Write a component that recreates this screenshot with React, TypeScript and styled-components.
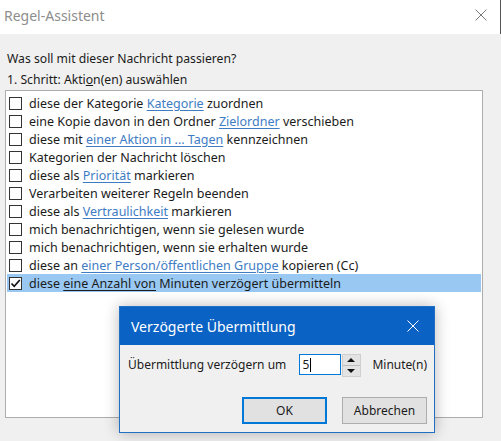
import styled, { createGlobalStyle } from "styled-components";

const GlobalStyle = createGlobalStyle`
  html, body {
    margin: 0;
    padding: 0;
    background: #f0f0f0;
  }
  body {
    font-family: "Noto Sans", "Open Sans", sans-serif;
    font-size: 12px;
    color: #1b1b1b;
  }
`;

const Window = styled.div`
  position: relative;
  width: 501px;
  height: 441px;
  overflow: hidden;
  background: #f0f0f0;
  display: flex;
  flex-direction: column;
`;

const TitleBar = styled.div`
  height: 34px;
  flex: none;
  background: #fff;
  border-right: 1px solid #555;
  display: flex;
  align-items: center;
  justify-content: space-between;
  padding: 0 13px 0 4px;
`;

const Title = styled.span`
  font-size: 14px;
  color: #8d8d8d;
  margin-top: -4px;
`;

const CloseIcon = ({ color, size }: { color: string; size: number }) => (
  <svg width={size} height={size} viewBox="0 0 12 12">
    <path d="M0.5 0.5 L11.5 11.5 M11.5 0.5 L0.5 11.5" stroke={color} strokeWidth="1" fill="none" />
  </svg>
);

const CloseButton = styled.span<{ $top: number }>`
  display: flex;
  margin-top: ${(p) => p.$top}px;
`;

const Body = styled.div`
  flex: 1;
  padding: 17px 0 0 5px;
  display: flex;
  flex-direction: column;
`;

const Question = styled.div`
  padding-left: 2px;
  line-height: 16px;
  font-size: 12.2px;
`;

const Step = styled.div`
  padding-left: 2px;
  margin-top: 5px;
  line-height: 16px;
  font-size: 12.2px;
`;

const Accel = styled.span`
  text-decoration: underline;
`;

const ListBox = styled.div`
  margin-top: 2px;
  width: 478px;
  height: 328px;
  box-sizing: border-box;
  border: 1px solid #adadad;
  background: #fff;
  padding: 3px 1px 0 1px;
  font-size: 12.5px;
`;

const Row = styled.div<{ $selected?: boolean }>`
  height: 18px;
  display: flex;
  align-items: center;
  padding-left: 2px;
  background: ${(p) => (p.$selected ? "#99c9f3" : "transparent")};
  white-space: nowrap;
`;

const Box = styled.span`
  width: 13px;
  height: 13px;
  box-sizing: border-box;
  border: 1px solid #333;
  background: #fff;
  flex: none;
  display: flex;
  align-items: center;
  justify-content: center;
  margin-right: 7px;
`;

const Link = styled.span<{ $plain?: boolean }>`
  color: ${(p) => (p.$plain ? "#1b1b1b" : "#3e7cc4")};
  text-decoration: underline;
  text-underline-offset: 2px;
`;

type Part = string | { link: string };

const rows: { parts: Part[]; checked?: boolean }[] = [
  { parts: ["diese der Kategorie ", { link: "Kategorie" }, " zuordnen"] },
  { parts: ["eine Kopie davon in den Ordner ", { link: "Zielordner" }, " verschieben"] },
  { parts: ["diese mit ", { link: "einer Aktion in ... Tagen" }, " kennzeichnen"] },
  { parts: ["Kategorien der Nachricht löschen"] },
  { parts: ["diese als ", { link: "Priorität" }, " markieren"] },
  { parts: ["Verarbeiten weiterer Regeln beenden"] },
  { parts: ["diese als ", { link: "Vertraulichkeit" }, " markieren"] },
  { parts: ["mich benachrichtigen, wenn sie gelesen wurde"] },
  { parts: ["mich benachrichtigen, wenn sie erhalten wurde"] },
  { parts: ["diese an ", { link: "einer Person/öffentlichen Gruppe" }, " kopieren (Cc)"] },
  { parts: ["diese ", { link: "eine Anzahl von" }, " Minuten verzögert übermitteln"], checked: true },
];

const Dialog = styled.div`
  position: absolute;
  left: 119px;
  top: 306px;
  width: 316px;
  height: 127px;
  box-sizing: border-box;
  border: 1px solid #1f6fc5;
  background: #f0f0f0;
  box-shadow: 0 0 14px rgba(0, 0, 0, 0.28);
  display: flex;
  flex-direction: column;
`;

const DialogTitle = styled.div`
  height: 38px;
  flex: none;
  background: #0a63c4;
  color: #fff;
  font-size: 14px;
  display: flex;
  align-items: center;
  justify-content: space-between;
  padding: 0 15px 0 11px;
`;

const DialogBody = styled.div`
  padding: 9px 7px 0 8px;
  display: flex;
  flex-direction: column;
`;

const FieldRow = styled.div`
  display: flex;
  align-items: flex-start;
  height: 23px;
`;

const Label = styled.span`
  width: 171px;
  line-height: 20px;
  margin-top: 1px;
`;

const Input = styled.div`
  width: 42px;
  height: 21px;
  box-sizing: border-box;
  border: 1px solid #0078d7;
  background: #fff;
  display: flex;
  align-items: center;
  padding-left: 3px;
  line-height: 16px;
`;

const Caret = styled.span`
  width: 1px;
  height: 14px;
  background: #000;
  margin-left: 1px;
`;

const Spinner = styled.div`
  width: 20px;
  height: 23px;
  margin-left: 1px;
  display: flex;
  flex-direction: column;
  background: #e3e3e3;
  border: 1px solid #cfcfcf;
  box-sizing: border-box;
`;

const SpinHalf = styled.div<{ $top?: boolean }>`
  flex: 1;
  display: flex;
  align-items: center;
  justify-content: center;
  border-bottom: ${(p) => (p.$top ? "1px solid #bdbdbd" : "none")};
`;

const Unit = styled.span`
  margin-left: 11px;
  line-height: 20px;
  margin-top: 1px;
`;

const Buttons = styled.div`
  display: flex;
  justify-content: flex-end;
  gap: 15px;
  margin-top: 20px;
`;

const Button = styled.div<{ $default?: boolean }>`
  width: 85px;
  height: 27px;
  box-sizing: border-box;
  border: ${(p) => (p.$default ? "2px solid #0078d7" : "1px solid #adadad")};
  background: #e1e1e1;
  display: flex;
  align-items: center;
  justify-content: center;
`;

const Arrow = ({ up }: { up?: boolean }) => (
  <svg width="8" height="4" viewBox="0 0 8 4">
    <polygon points={up ? "0,4 8,4 4,0" : "0,0 8,0 4,4"} fill="#111" />
  </svg>
);

function App() {
  return (
    <Window>
      <GlobalStyle />
      <TitleBar>
        <Title>Regel-Assistent</Title>
        <CloseButton $top={-4}>
          <CloseIcon color="#7a7a7a" size={12} />
        </CloseButton>
      </TitleBar>
      <Body>
        <Question>Was soll mit dieser Nachricht passieren?</Question>
        <Step>
          1. Schritt: Akti<Accel>o</Accel>n(en) auswählen
        </Step>
        <ListBox>
          {rows.map((r, i) => (
            <Row key={i} $selected={r.checked}>
              <Box>
                {r.checked ? (
                  <svg width="11" height="11" viewBox="0 0 11 11">
                    <path d="M1.5 5.5 L4.2 8.3 L9.8 2" stroke="#111" strokeWidth="1.7" fill="none" />
                  </svg>
                ) : null}
              </Box>
              {r.parts.map((p, j) =>
                typeof p === "string" ? (
                  <span key={j}>{p.replace(/ /g, "\u00a0")}</span>
                ) : (
                  <Link key={j} $plain={r.checked}>
                    {p.link}
                  </Link>
                )
              )}
            </Row>
          ))}
        </ListBox>
      </Body>
      <Dialog>
        <DialogTitle>
          <span>Verzögerte Übermittlung</span>
          <CloseButton $top={0}>
            <CloseIcon color="#fff" size={12} />
          </CloseButton>
        </DialogTitle>
        <DialogBody>
          <FieldRow>
            <Label>Übermittlung verzögern um</Label>
            <Input>
              5<Caret />
            </Input>
            <Spinner>
              <SpinHalf $top>
                <Arrow up />
              </SpinHalf>
              <SpinHalf>
                <Arrow />
              </SpinHalf>
            </Spinner>
            <Unit>Minute(n)</Unit>
          </FieldRow>
          <Buttons>
            <Button $default>OK</Button>
            <Button>Abbrechen</Button>
          </Buttons>
        </DialogBody>
      </Dialog>
    </Window>
  );
}

export default App;
